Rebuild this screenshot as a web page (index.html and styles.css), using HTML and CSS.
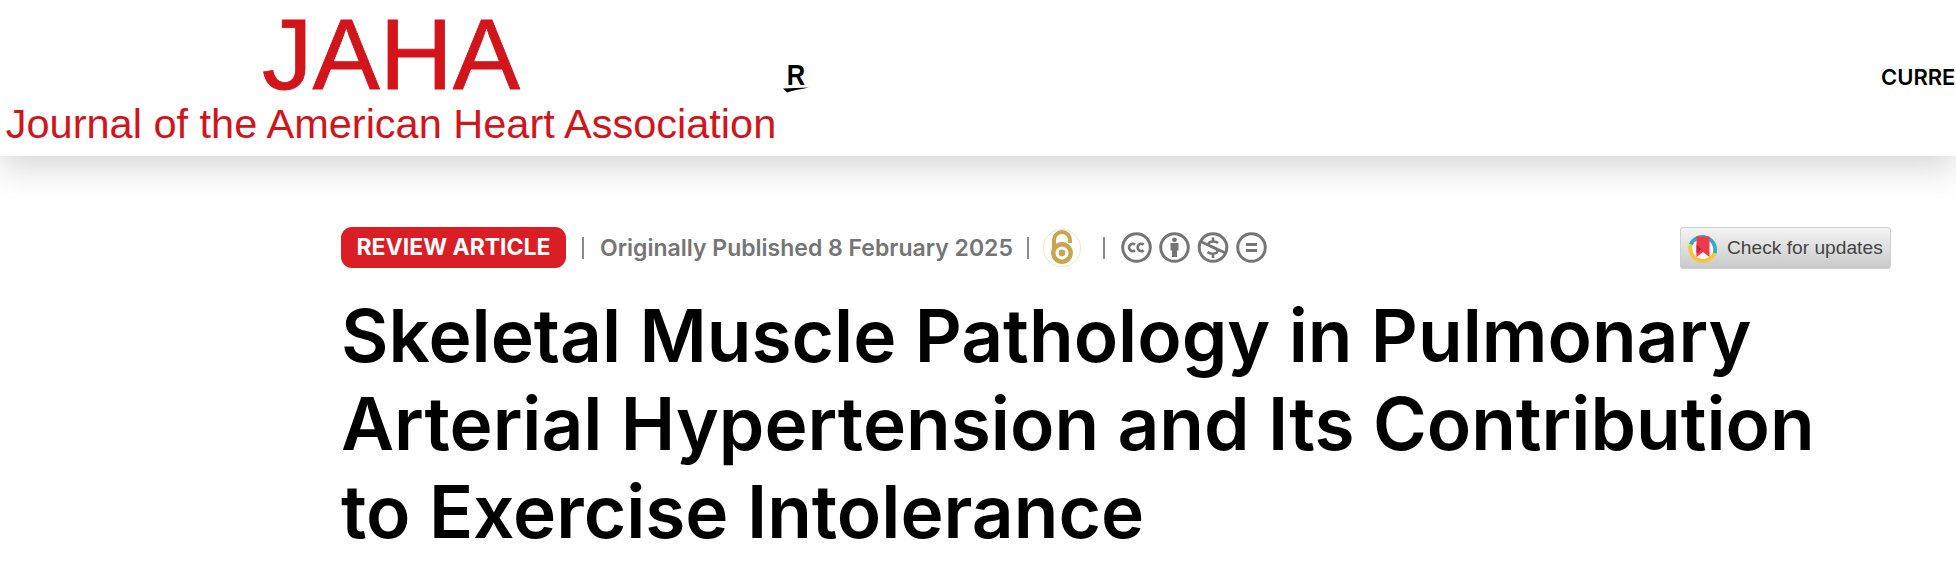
FILE: index.html
```html
<!DOCTYPE html>
<html lang="en">
<head>
    <meta charset="UTF-8">
    <title>Skeletal Muscle Pathology in Pulmonary Arterial Hypertension</title>
    <link rel="stylesheet" href="styles.css">
</head>
<body>
    <header class="site-header">
        <a class="logo">
            <span class="logo-short">JAHA</span>
            <span class="logo-long">Journal of the American Heart Association</span>
        </a>
        <div class="brand-mark">
            <span class="brand-letter">R</span>
            <svg class="brand-swoosh" width="26" height="6" viewBox="0 0 26 6"><path d="M0 1.5 L26 0.5 C18 2 10 3.5 4 5.5 Z" fill="#000"/></svg>
        </div>
        <nav class="main-nav">CURRENT ISSUE</nav>
    </header>

    <main class="article">
        <div class="meta-row">
            <span class="badge">REVIEW ARTICLE</span>
            <span class="sep sep-first"></span>
            <span class="published">Originally Published 8 February 2025</span>
            <span class="sep sep-second"></span>
            <svg class="oa-icon" width="38" height="38" viewBox="0 0 38 38">
                <circle cx="19" cy="19" r="18.6" fill="none" stroke="#e8d9b0" stroke-width="0.7"/>
                <path d="M11 19 V11 A8 8 0 0 1 27 11 V14" fill="none" stroke="#c9a54e" stroke-width="4"/>
                <circle cx="19" cy="24" r="8.7" fill="none" stroke="#c9a54e" stroke-width="4.4"/>
                <circle cx="19" cy="24" r="3.4" fill="#c9a54e"/>
            </svg>
            <span class="sep sep-third"></span>
            <div class="cc-icons">
                <svg width="31" height="31" viewBox="0 0 31 31">
                    <circle cx="15.5" cy="15.5" r="13.8" fill="none" stroke="#757575" stroke-width="3"/>
                    <path d="M14 12.8 A3.6 3.6 0 1 0 14 18.2 M22.6 12.8 A3.6 3.6 0 1 0 22.6 18.2" fill="none" stroke="#757575" stroke-width="2.6"/>
                </svg>
                <svg width="31" height="31" viewBox="0 0 31 31">
                    <circle cx="15.5" cy="15.5" r="13.8" fill="none" stroke="#757575" stroke-width="3"/>
                    <circle cx="15.5" cy="7.8" r="2.4" fill="#757575"/>
                    <path d="M11.5 11 H19.5 V18.5 H18 V25 H13 V18.5 H11.5 Z" fill="#757575"/>
                </svg>
                <svg width="32" height="31" viewBox="0 0 32 31">
                    <circle cx="16" cy="15.5" r="13.8" fill="none" stroke="#757575" stroke-width="3"/>
                    <path d="M3.5 9.5 L28.5 21" fill="none" stroke="#757575" stroke-width="2.6"/>
                    <path d="M21 11 C19 9 12 8.5 11.5 12 C11.2 15.5 20.5 15 20.5 19 C20.2 22.5 13 22.3 10.5 20 M16 5.5 V9 M16 22 V26" fill="none" stroke="#757575" stroke-width="2.6"/>
                </svg>
                <svg width="31" height="31" viewBox="0 0 31 31">
                    <circle cx="15.5" cy="15.5" r="13.8" fill="none" stroke="#757575" stroke-width="3"/>
                    <path d="M10 12.6 H21 M10 18.4 H21" fill="none" stroke="#757575" stroke-width="3"/>
                </svg>
            </div>
            <div class="updates-btn">
                <svg width="30" height="30" viewBox="0 0 30 30">
                    <circle cx="15" cy="15" r="12.8" fill="#f6f6f6"/>
                    <path d="M2.7 11.5 A12.8 12.8 0 0 1 26.7 20.2" fill="none" stroke="#36a9c4" stroke-width="3.8"/>
                    <path d="M26.7 20.2 A12.8 12.8 0 0 1 2.7 11.5" fill="none" stroke="#f4c63a" stroke-width="3.8"/>
                    <path d="M8.5 3.5 H21.5 V24 L15 19 L8.5 24 Z" fill="#ee3a4c"/>
                    <path d="M8.5 11.5 L13.5 16 L8.5 20.5 Z" fill="#c02a35"/>
                </svg>
                <span>Check for updates</span>
            </div>
        </div>
        <h1>Skeletal Muscle Pathology in Pulmonary Arterial Hypertension and Its Contribution to Exercise Intolerance</h1>
    </main>
</body>
</html>
```

FILE: styles.css
```css
html, body {
    margin: 0;
    padding: 0;
    height: 564px;
    overflow: hidden;
    background-color: #fff;
}
body {
    font-family: Inter, Arial, sans-serif;
    color: #000;
}
.site-header {
    display: flex;
    align-items: flex-start;
    height: 156px;
    background-color: #fff;
    box-shadow: 0 12px 32px rgba(0, 0, 0, 0.16);
    white-space: nowrap;
}
.logo {
    display: flex;
    flex-direction: column;
    align-items: center;
    flex-shrink: 0;
    width: 770px;
    margin-left: 6px;
    padding-top: 9px;
    font-family: "Liberation Sans", Arial, sans-serif;
    color: #d2141b;
}
.logo-short {
    font-size: 101px;
    line-height: 91px;
    -webkit-text-stroke: 0.8px #d2141b;
}
.logo-long {
    font-size: 41.5px;
    line-height: 48px;
}
.brand-mark {
    display: flex;
    flex-direction: column;
    align-items: center;
    flex-shrink: 0;
    width: 26px;
    margin-left: 7px;
    margin-top: 60px;
}
.brand-letter {
    font-family: "Liberation Sans", Arial, sans-serif;
    font-weight: bold;
    font-size: 30px;
    line-height: 30px;
    transform: scaleX(0.85);
}
.brand-swoosh {
    display: block;
    margin-top: -3px;
}
.main-nav {
    flex: 1 1 0;
    min-width: 0;
    overflow: hidden;
    margin-left: 1072px;
    margin-top: 63px;
    font-size: 22px;
    line-height: 28px;
    font-weight: 600;
}
.article {
    padding: 71px 65px 0 341px;
}
.meta-row {
    display: flex;
    align-items: center;
    height: 41px;
}
.badge {
    background-color: #da1e26;
    color: #fff;
    font-size: 23px;
    font-weight: 700;
    line-height: 41px;
    width: 225px;
    text-align: center;
    border-radius: 11px;
}
.sep {
    width: 2px;
    height: 22px;
    background-color: #8a8a8a;
}
.sep-first {
    margin-left: 16px;
}
.published {
    margin-left: 16px;
    font-size: 23px;
    font-weight: 600;
    color: #757575;
}
.sep-second {
    margin-left: 14px;
}
.oa-icon {
    margin-left: 14px;
}
.sep-third {
    margin-left: 22px;
}
.cc-icons {
    display: flex;
    gap: 7px;
    margin-left: 16px;
}
.updates-btn {
    display: flex;
    align-items: center;
    gap: 9px;
    margin-left: auto;
    box-sizing: border-box;
    width: 211px;
    height: 42px;
    padding-left: 7px;
    border: 1px solid #cfcfcf;
    border-radius: 3px;
    background: linear-gradient(#f4f4f4, #c9c9c9);
    font-family: "Liberation Sans", Arial, sans-serif;
    font-size: 19.2px;
    color: #444;
}
h1 {
    margin: 24px 0 0;
    font-size: 73px;
    line-height: 88px;
    font-weight: 600;
}
```
